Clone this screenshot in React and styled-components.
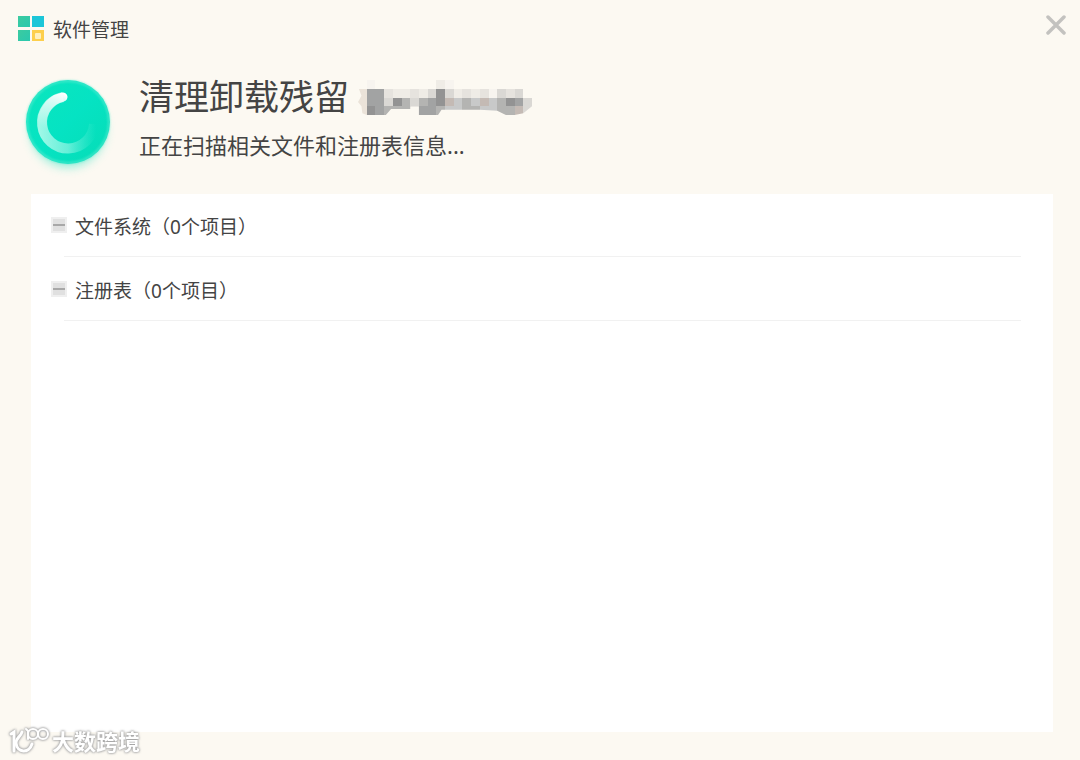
import styled, { createGlobalStyle } from "styled-components";

// rows of the pixelated software name, one letter per shade
const mosaicRows = [
  " a       ba         ",
  "pggcbbcbdhdbcbcadcd ",
  "pggdhfdfghiefeiefhgd",
  "phgffffggfeeffeeffid",
];

const shades = {
  a: "#f7f4ef",
  b: "#efece6",
  c: "#e6e3de",
  d: "#dad8d4",
  e: "#c8c9c9",
  f: "#b4b4b2",
  g: "#a2a3a3",
  h: "#939393",
  i: "#c4bab4",
  p: "#ebe3d9",
};

const groups = [
  { id: "files", name: "文件系统", count: 0 },
  { id: "registry", name: "注册表", count: 0 },
];

function AppLogo() {
  return (
    <svg width="26" height="26" viewBox="0 0 26 26" aria-hidden="true">
      <defs>
        <linearGradient id="green" x1="0" y1="0" x2="1" y2="1">
          <stop offset="0" stopColor="#3ccba0" />
          <stop offset="1" stopColor="#2ac8ae" />
        </linearGradient>
      </defs>
      <rect width="12" height="11" fill="url(#green)" />
      <rect x="14" width="12" height="11" fill="#1cc6d8" />
      <rect y="14" width="12" height="11" fill="url(#green)" />
      <rect x="14" y="14" width="12" height="11" fill="#fdcf4c" />
      <rect x="17" y="17" width="6" height="6" rx="1" fill="#fff0bd" />
    </svg>
  );
}

function ScanOrb() {
  return (
    <svg width="108" height="112" viewBox="0 0 108 112" aria-hidden="true">
      <defs>
        <linearGradient id="orb" x1="0" y1="0" x2="1" y2="1">
          <stop offset="0" stopColor="#0be6bd" />
          <stop offset="0.5" stopColor="#05e3c3" />
          <stop offset="1" stopColor="#06dcb6" />
        </linearGradient>
        <linearGradient id="arc" gradientUnits="userSpaceOnUse" x1="26" y1="0" x2="82" y2="0">
          <stop offset="0" stopColor="#c4fdf0" stopOpacity="0.8" />
          <stop offset="0.5" stopColor="#9af7e6" stopOpacity="0.65" />
          <stop offset="1" stopColor="#5ff0da" stopOpacity="0" />
        </linearGradient>
        <linearGradient id="arcTip" gradientUnits="userSpaceOnUse" x1="50" y1="24" x2="30" y2="58">
          <stop offset="0" stopColor="#fff" />
          <stop offset="1" stopColor="#fff" stopOpacity="0" />
        </linearGradient>
        <filter id="glow" x="-30%" y="-30%" width="160%" height="160%">
          <feGaussianBlur stdDeviation="5" />
        </filter>
        <filter id="soft">
          <feGaussianBlur stdDeviation="1" />
        </filter>
      </defs>
      <circle cx="54" cy="60" r="38" fill="#5ee8cd" opacity="0.6" filter="url(#glow)" />
      <circle cx="54" cy="52" r="42" fill="url(#orb)" />
      <circle cx="54" cy="52" r="41" fill="none" stroke="#5cebd0" strokeWidth="2" opacity="0.7" filter="url(#soft)" />
      <path d="M49 27A26 26 0 1 0 80 54" fill="none" stroke="url(#arc)" strokeWidth="10" />
      <path d="M49 27A26 26 0 0 0 30 62" fill="none" stroke="url(#arcTip)" strokeWidth="9" strokeLinecap="round" />
    </svg>
  );
}

function HiddenName() {
  return (
    <svg width="174" height="35" viewBox="0 0 20 4" preserveAspectRatio="none" shapeRendering="crispEdges" aria-hidden="true">
      <clipPath id="smear">
        <path d="M0.1 1H1V0H19V2H20V3L19 3.8L18 4H17L16 3.5L14 3.4H9.6L9.2 4H7V3H6V3.3H3.8L3.2 4H1L0.5 3.8L0.4 3L0 2.5L0.4 1.8Z" />
      </clipPath>
      <g clipPath="url(#smear)">
        {mosaicRows.map((row, y) =>
          [...row].map((shade, x) =>
            shades[shade] ? <rect key={`${x}-${y}`} x={x} y={y} width="1" height="1" fill={shades[shade]} /> : null
          )
        )}
      </g>
    </svg>
  );
}

function WatermarkLogo() {
  return (
    <svg width="42" height="32" viewBox="0 0 42 32" fill="none" stroke="#fff" strokeWidth="3" strokeLinecap="round" aria-hidden="true">
      <path d="M3 9L6 7V26" />
      <path d="M14 7C13 11 8 13 8 18C9 28 21 29 24 19" />
      <path d="M18 4L20 6V14" strokeWidth="2" />
      <circle cx="25" cy="9" r="5" strokeWidth="2" />
      <circle cx="35" cy="9" r="5" strokeWidth="2" />
    </svg>
  );
}

export default function App() {
  return (
    <Window>
      <GlobalStyle />
      <TitleBar>
        <AppLogo />
        <AppName>软件管理</AppName>
        <CloseButton aria-label="关闭">
          <svg width="20" height="20" viewBox="0 0 20 20">
            <path d="M2 2L18 18M18 2L2 18" stroke="#c3c2bf" strokeWidth="3.5" strokeLinecap="round" />
          </svg>
        </CloseButton>
      </TitleBar>
      <Header>
        <ScanOrb />
        <div>
          <Title>
            清理卸载残留
            <HiddenName />
          </Title>
          <Status>正在扫描相关文件和注册表信息...</Status>
        </div>
      </Header>
      <Panel>
        {groups.map((group) => (
          <Group key={group.id}>
            <Toggle aria-label={group.name} aria-expanded="true">
              <ToggleBar />
            </Toggle>
            <GroupName>
              {group.name}（{group.count}个项目）
            </GroupName>
          </Group>
        ))}
      </Panel>
      <Watermark>
        <WatermarkLogo />
        大数跨境
      </Watermark>
    </Window>
  );
}

const GlobalStyle = createGlobalStyle`
  * {
    box-sizing: border-box;
  }

  body {
    margin: 0;
    background: #fcf9f2;
    color: #444;
    font-family: "Noto Sans", "Noto Sans CJK SC", sans-serif;
  }
`;

const Window = styled.main`
  position: relative;
  display: flex;
  flex-direction: column;
  min-height: 100vh;
  padding-bottom: 28px;
`;

const TitleBar = styled.header`
  display: flex;
  align-items: center;
  gap: 9px;
  height: 58px;
  padding: 0 14px 0 18px;
`;

const AppName = styled.span`
  padding-top: 2px;
  font-size: 19px;
  line-height: 28px;
`;

const CloseButton = styled.button`
  display: flex;
  align-self: flex-start;
  margin: 15px 0 0 auto;
  padding: 0;
  border: none;
  background: none;
`;

const Header = styled.section`
  display: flex;
  gap: 17px;
  height: 136px;
  padding: 12px 14px;
`;

const Title = styled.h1`
  display: flex;
  align-items: center;
  gap: 9px;
  margin: 0;
  font-size: 35px;
  font-weight: 400;
  line-height: 54px;
`;

const Status = styled.p`
  margin: 0;
  font-size: 22px;
  line-height: 42px;
`;

const Panel = styled.section`
  display: flex;
  flex: 1;
  flex-direction: column;
  gap: 1px;
  margin: 0 27px 0 31px;
  padding: 0 32px 0 20px;
  background: #fff;
`;

const Group = styled.div`
  display: grid;
  grid-template-columns: 16px 1fr;
  align-items: center;
  column-gap: 8px;
  height: 63px;

  &::after {
    content: "";
    grid-column: 1 / -1;
    height: 1px;
    margin-left: 13px;
    background: #f1f1f1;
  }
`;

const Toggle = styled.button`
  display: grid;
  place-items: center;
  width: 16px;
  height: 16px;
  padding: 0;
  border: 2px solid #efefef;
  background: #e0e0e0;
`;

const ToggleBar = styled.span`
  width: 12px;
  height: 2px;
  background: #a8a8a8;
`;

const GroupName = styled.span`
  padding: 19px 0 15px;
  font-size: 19px;
  line-height: 28px;
`;

const Watermark = styled.div`
  position: absolute;
  left: 8px;
  bottom: 3px;
  display: flex;
  align-items: center;
  gap: 2px;
  color: #fff;
  font-size: 22px;
  font-weight: 700;
  line-height: 32px;
  filter: drop-shadow(0 0 1px #999) drop-shadow(0 0 1px #bbb);
`;
